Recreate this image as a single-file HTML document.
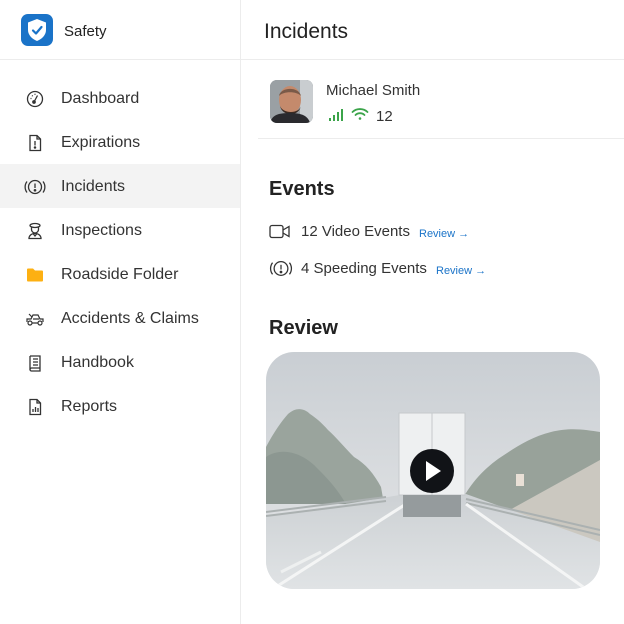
<!DOCTYPE html>
<html><head><meta charset="utf-8"><style>
*{margin:0;padding:0;box-sizing:border-box}
body{width:624px;height:624px;background:#fff;font-family:"Liberation Sans",sans-serif;color:#2b2f33;position:relative;overflow:hidden}
.abs{position:absolute}
.side{left:0;top:0;width:241px;height:624px;border-right:1px solid #ececec}
.hline{left:0;top:59px;width:624px;height:1px;background:#ececec}
.nav{position:absolute;left:0;width:240px;height:44px;display:flex;align-items:center;font-size:16px;color:#333;padding-top:2px}
.nav .ic{width:60px;display:flex;justify-content:center;padding-left:10px}
.nav span{margin-left:1px}
.sel{background:#f3f3f3}
svg{display:block}
</style></head><body>
<div class="abs side"></div>
<div class="abs hline"></div>
<div class="abs" style="left:21px;top:14px;width:32px;height:32px;border-radius:7px;background:#1a73c8">
<svg width="32" height="32" viewBox="0 0 32 32"><path d="M16 5 L25 8.5 V16 C25 21 21 25 16 27 C11 25 7 21 7 16 V8.5 Z" fill="#fff"/><path d="M12 16.5 L15 19.5 L20.5 13" stroke="#1a73c8" stroke-width="2.2" fill="none" stroke-linecap="round" stroke-linejoin="round"/></svg></div>
<div class="abs" style="left:64px;top:23px;font-size:15px;color:#222">Safety</div>
<div class="abs" style="left:264px;top:20px;font-size:21px;color:#222">Incidents</div>

<div class="nav" style="top:76px"><div class="ic"><svg width="18" height="18" viewBox="0 0 18 18" fill="none" stroke="#333" stroke-width="1.3"><circle cx="9" cy="9" r="7.5"/><path d="M8 12 L11.5 5.5"/><circle cx="8" cy="12" r="1.2" fill="#333"/><path d="M4.5 8.5h1M6 5.5l.7.7M9 3.8v1"/></svg></div><span>Dashboard</span></div>
<div class="nav" style="top:120px"><div class="ic"><svg width="16" height="18" viewBox="0 0 16 18" fill="none" stroke="#333" stroke-width="1.3"><path d="M3 1.5h7l3.5 3.5v11.5H3z"/><path d="M10 1.5V5h3.5"/><path d="M8 7v4.5"/><circle cx="8" cy="13.5" r=".6" fill="#333"/></svg></div><span>Expirations</span></div>
<div class="nav sel" style="top:164px"><div class="ic"><svg width="22" height="18" viewBox="0 0 22 18" fill="none" stroke="#333" stroke-width="1.3"><circle cx="11" cy="9" r="6.5"/><path d="M3 3.5a9 9 0 0 0 0 11M19 3.5a9 9 0 0 1 0 11"/><path d="M11 5.5v4.5"/><circle cx="11" cy="12.3" r=".7" fill="#333"/></svg></div><span>Incidents</span></div>
<div class="nav" style="top:208px"><div class="ic"><svg width="18" height="18" viewBox="0 0 18 18" fill="none" stroke="#333" stroke-width="1.3"><ellipse cx="9" cy="3.5" rx="5" ry="2"/><path d="M5.5 5.5v2a3.5 3.5 0 0 0 7 0v-2"/><path d="M3 16.5c0-3 2.5-5 6-5s6 2 6 5z"/><path d="M7 11.5L9 14l2-2.5"/></svg></div><span>Inspections</span></div>
<div class="nav" style="top:252px"><div class="ic"><svg width="18" height="16" viewBox="0 0 18 16"><path d="M1 2.5a1 1 0 0 1 1-1h5l2 2h7a1 1 0 0 1 1 1v9a1 1 0 0 1-1 1H2a1 1 0 0 1-1-1z" fill="#fdb012"/></svg></div><span>Roadside Folder</span></div>
<div class="nav" style="top:296px"><div class="ic"><svg width="20" height="16" viewBox="0 0 20 16" fill="none" stroke="#333" stroke-width="1.2"><path d="M2 11V8h4l2-4h5l2 4h3v3"/><circle cx="5" cy="12" r="2"/><circle cx="15" cy="12" r="2"/><path d="M7 12h6M8 8h6M4 3l3 3"/></svg></div><span>Accidents &amp; Claims</span></div>
<div class="nav" style="top:340px"><div class="ic"><svg width="16" height="18" viewBox="0 0 16 18" fill="none" stroke="#333" stroke-width="1.3"><path d="M3 2h10v12H4.5a1.5 1.5 0 0 0 0 3H13v-3"/><path d="M3 2v13.5M6 5h5M6 8h5M6 11h5"/></svg></div><span>Handbook</span></div>
<div class="nav" style="top:384px"><div class="ic"><svg width="16" height="18" viewBox="0 0 16 18" fill="none" stroke="#333" stroke-width="1.3"><path d="M3 1.5h7l3.5 3.5v11.5H3z"/><path d="M10 1.5V5h3.5M6 14v-3M8.5 14V9M11 14v-4"/></svg></div><span>Reports</span></div>

<div class="abs" style="left:270px;top:80px;width:43px;height:43px;border-radius:7px;overflow:hidden;background:#8a8f93">
<svg width="43" height="43" viewBox="0 0 43 43"><rect width="43" height="43" fill="#9aa0a4"/><rect x="30" y="0" width="13" height="43" fill="#c9cdd0"/><ellipse cx="20" cy="20" rx="11" ry="14" fill="#c48a6c"/><path d="M10 26c2 10 18 12 21 0c-2 8-18 8-21 0z" fill="#3a2a22"/><path d="M9 16c1-9 20-10 22 0c-4-5-18-5-22 0z" fill="#7a5a48"/><path d="M0 43c2-8 8-10 20-10s18 3 20 10z" fill="#2a2a2e"/></svg></div>
<div class="abs" style="left:326px;top:82px;font-size:15px;color:#333">Michael Smith</div>
<svg class="abs" style="left:329px;top:108px" width="16" height="14" viewBox="0 0 16 14" fill="#3ba44a"><rect x="0" y="10" width="2" height="3"/><rect x="4" y="7" width="2" height="6"/><rect x="8" y="4" width="2" height="9"/><rect x="12" y="1" width="2" height="12"/></svg>
<svg class="abs" style="left:351px;top:107px" width="18" height="14" viewBox="0 0 18 14" fill="none" stroke="#3ba44a" stroke-width="1.8" stroke-linecap="round"><path d="M1.5 5a11 11 0 0 1 15 0M4.5 8a6.5 6.5 0 0 1 9 0"/><circle cx="9" cy="11.5" r="1.3" fill="#3ba44a" stroke="none"/></svg>
<div class="abs" style="left:376px;top:108px;font-size:15px;color:#333">12</div>
<div class="abs" style="left:258px;top:138px;width:366px;height:1px;background:#ececec"></div>

<div class="abs" style="left:269px;top:178px;font-size:20px;font-weight:bold;color:#222">Events</div>
<svg class="abs" style="left:269px;top:224px" width="22" height="15" viewBox="0 0 22 15" fill="none" stroke="#333" stroke-width="1.3"><rect x="1" y="1.5" width="13" height="12" rx="2"/><path d="M14 6l6-3.5v10L14 9"/></svg>
<div class="abs" style="left:301px;top:223px;font-size:15px;color:#333">12 Video Events</div>
<div class="abs" style="left:419px;top:228px;font-size:11px;color:#1a73c8">Review →</div>
<svg class="abs" style="left:268px;top:259px" width="26" height="19" viewBox="0 0 22 18" fill="none" stroke="#333" stroke-width="1.2"><circle cx="11" cy="9" r="6.5"/><path d="M3 3.5a9 9 0 0 0 0 11M19 3.5a9 9 0 0 1 0 11"/><path d="M11 5.5v4.5"/><circle cx="11" cy="12.3" r=".7" fill="#333"/></svg>
<div class="abs" style="left:301px;top:260px;font-size:15px;color:#333">4 Speeding Events</div>
<div class="abs" style="left:436px;top:265px;font-size:11px;color:#1a73c8">Review →</div>

<div class="abs" style="left:269px;top:317px;font-size:20px;font-weight:bold;color:#222">Review</div>

<div class="abs" style="left:266px;top:352px;width:334px;height:237px;border-radius:28px;overflow:hidden">
<svg width="334" height="237" viewBox="0 0 334 237">
<defs><linearGradient id="sky" x1="0" y1="0" x2="0" y2="1"><stop offset="0" stop-color="#c9ced3"/><stop offset=".5" stop-color="#d8dbde"/><stop offset="1" stop-color="#e3e5e6"/></linearGradient>
<linearGradient id="rd" x1="0" y1="0" x2="0" y2="1"><stop offset="0" stop-color="#cdd1d4"/><stop offset="1" stop-color="#e0e3e5"/></linearGradient></defs>
<rect width="334" height="237" fill="url(#sky)"/>
<path d="M0 152 L0 95 C8 80 15 70 22 62 C30 55 38 56 44 62 C50 66 55 70 62 78 C70 85 78 95 88 105 C100 112 108 122 115 135 L118 152Z" fill="#9aa49d"/>
<path d="M0 152 L0 105 C15 95 35 100 50 115 C60 125 70 135 80 152Z" fill="#8c9791"/>
<path d="M195 150 C205 130 220 115 235 105 C250 95 265 85 285 80 C305 75 320 78 334 80 L334 170 L195 160Z" fill="#98a29a"/>
<path d="M240 160 L334 108 L334 205Z" fill="#cbc8c0"/>
<path d="M0 237 L0 165 L140 142 L200 142 L334 190 L334 237Z" fill="url(#rd)"/>
<path d="M0 160 L120 145 M0 164 L120 149" stroke="#abb1b1" stroke-width="2"/>
<path d="M200 147 L334 178 M200 151 L334 183" stroke="#abb1b1" stroke-width="2"/>
<path d="M10 235 L140 152" stroke="#f4f5f5" stroke-width="3"/>
<path d="M200 152 L320 237" stroke="#f4f5f5" stroke-width="3"/>
<path d="M15 220 L55 200" stroke="#eef0f0" stroke-width="3"/>
<rect x="133" y="61" width="66" height="82" fill="#eef0f1" stroke="#c5c9cc"/>
<line x1="166" y1="61" x2="166" y2="143" stroke="#c5c9cc"/>
<rect x="137" y="143" width="58" height="22" fill="#959b9d"/>
<circle cx="166" cy="119" r="22" fill="#111317"/>
<path d="M160 109 L175 119 L160 129Z" fill="#fff"/>
<rect x="250" y="122" width="8" height="12" fill="#e9e0d6"/>
</svg></div>
</body></html>
